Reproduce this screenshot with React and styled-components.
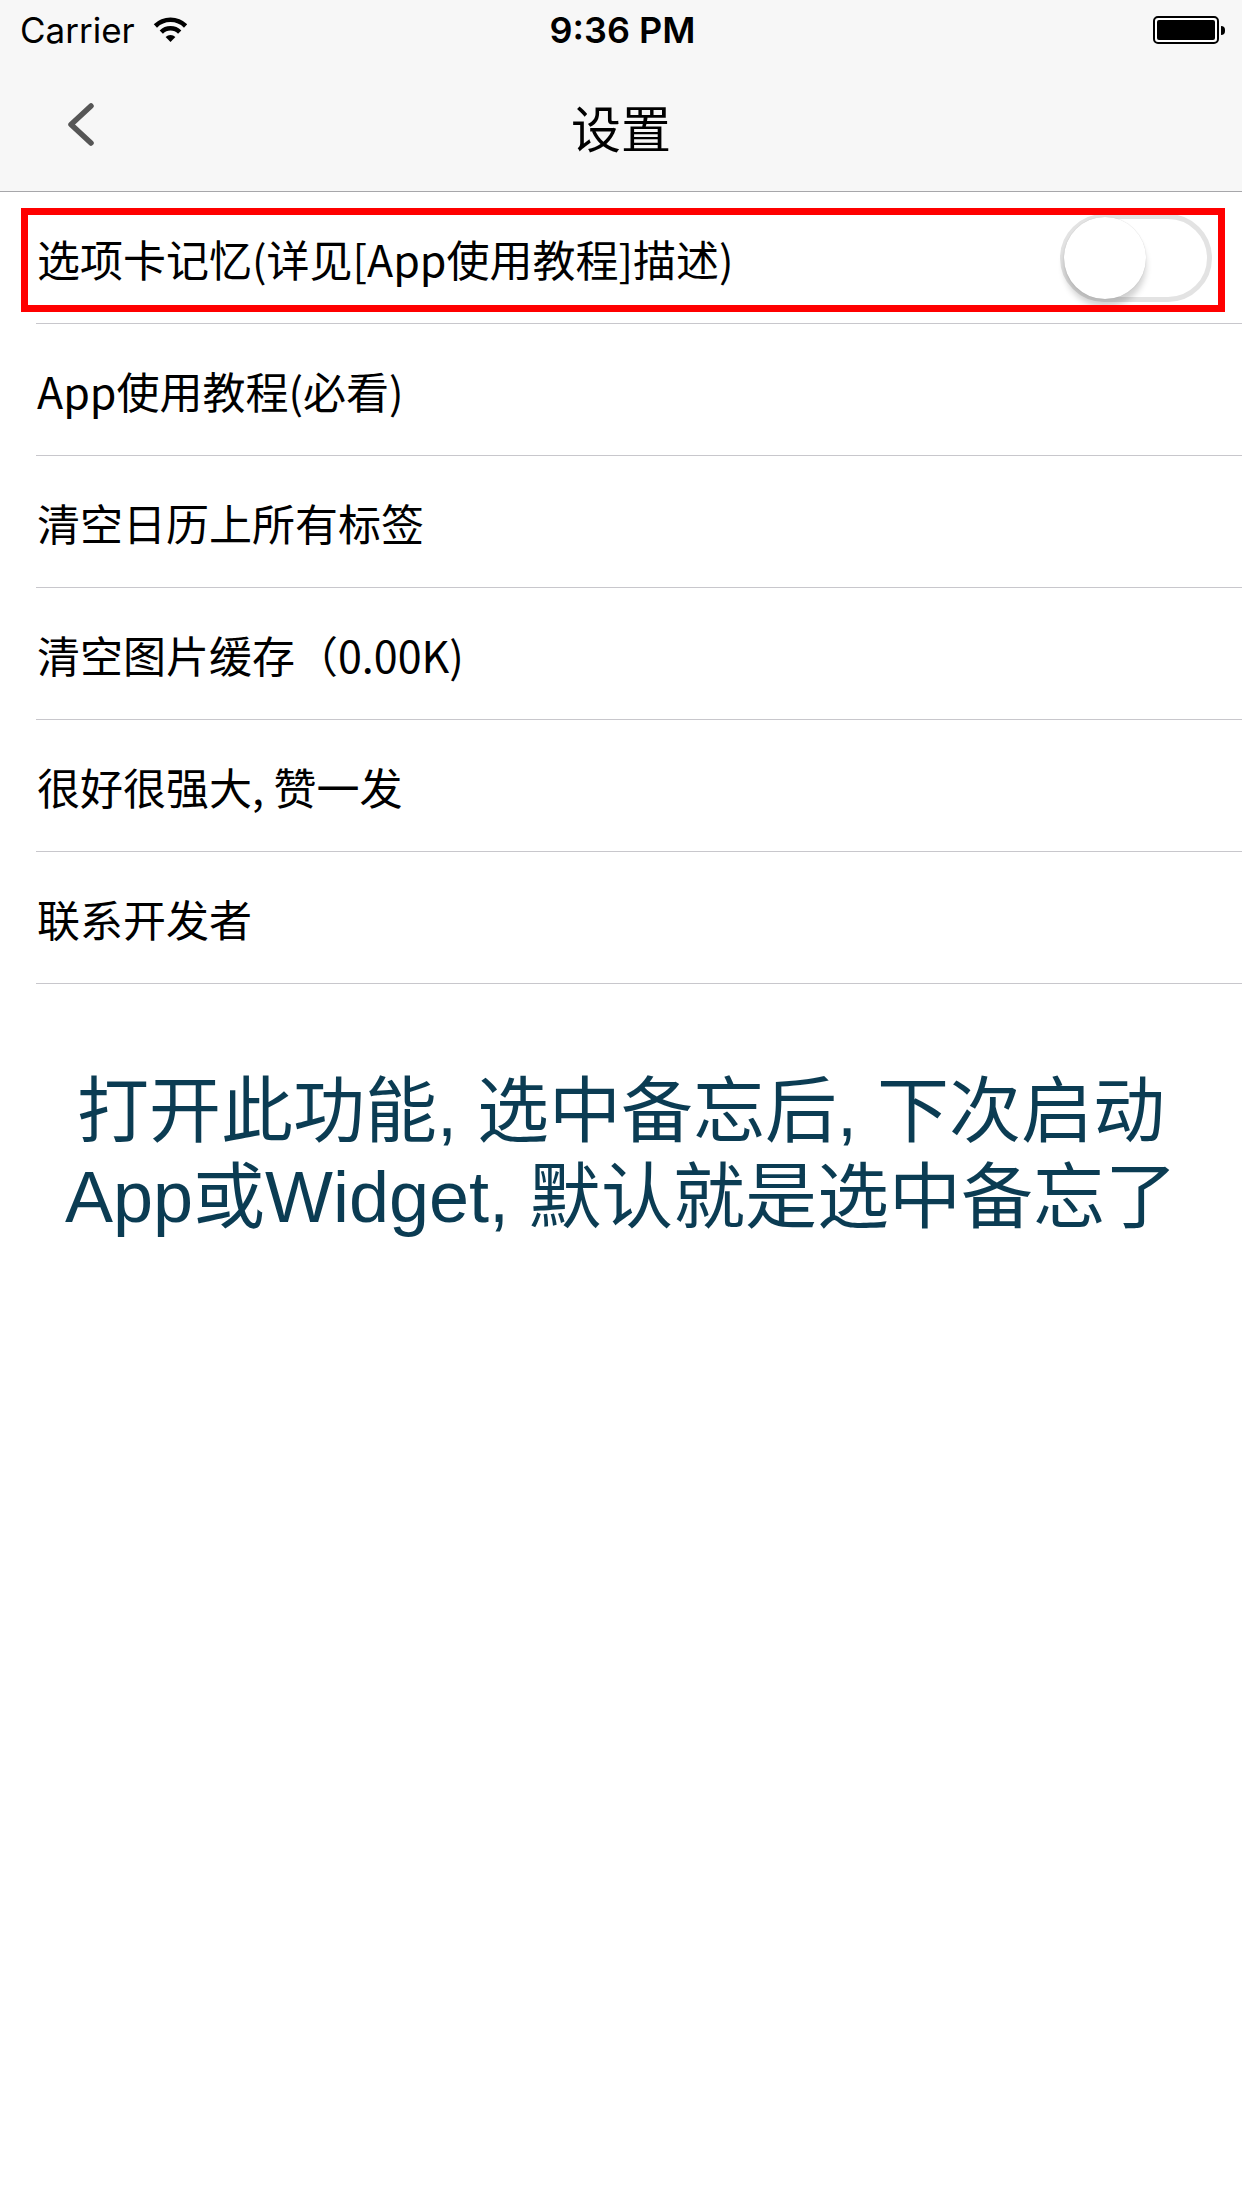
import React from "react";
import styled, { createGlobalStyle } from "styled-components";

const GlobalStyle = createGlobalStyle`
  * { box-sizing: border-box; }
  html, body { margin: 0; padding: 0; background: #ffffff; }
  body {
    font-family: "Liberation Sans", "Noto Sans CJK SC", sans-serif;
    -webkit-font-smoothing: antialiased;
  }
`;

const Page = styled.div`
  width: 1242px;
  min-height: 2208px;
  background: #ffffff;
  display: flex;
  flex-direction: column;
`;

const Header = styled.header`
  background: #f7f7f7;
  border-bottom: 1px solid #a7a7aa;
`;

const StatusBar = styled.div`
  height: 60px;
  display: grid;
  grid-template-columns: 1fr auto 1fr;
  align-items: center;
  padding: 0 17px 0 20px;
  font-family: Inter, "Liberation Sans", sans-serif;
  color: #000;
`;

const Carrier = styled.div`
  display: flex;
  align-items: center;
  gap: 17px;
  font-size: 35px;
`;

const Clock = styled.div`
  font-size: 36px;
  font-weight: 600;
`;

const Battery = styled.div`
  justify-self: end;
  display: flex;
  align-items: center;
  gap: 2px;
`;

const BatteryBody = styled.div`
  width: 66px;
  height: 28px;
  border: 2px solid #000;
  border-radius: 5px;
  padding: 2px;
  background: #fff;
`;

const BatteryFill = styled.div`
  width: 100%;
  height: 100%;
  background: #000;
  border-radius: 2px;
`;

const BatteryNub = styled.div`
  width: 4px;
  height: 9px;
  background: #000;
  border-radius: 0 4px 4px 0;
`;

const NavBar = styled.div`
  height: 131px;
  display: grid;
  grid-template-columns: 1fr auto 1fr;
  align-items: center;
  padding-left: 66px;
`;

const BackButton = styled.button`
  justify-self: start;
  display: flex;
  align-items: center;
  background: none;
  border: none;
  padding: 0;
  cursor: pointer;
`;

const Title = styled.h1`
  margin: 0;
  font-family: "Noto Sans CJK SC", sans-serif;
  font-size: 50px;
  font-weight: 400;
  color: #000;
  transform: translateX(-33px);
`;

const List = styled.ul`
  list-style: none;
  margin: 0;
  padding: 0;
`;

const Row = styled.li`
  position: relative;
  height: 132px;
  margin-left: 36px;
  padding: 0 30px 0 1px;
  border-bottom: 1px solid #c8c7cc;
  display: flex;
  align-items: center;
  justify-content: space-between;
  font-family: "Noto Sans CJK SC", sans-serif;
  font-size: 43px;
  color: #000;
`;

const Highlight = styled.span`
  position: absolute;
  left: -15px;
  right: 17px;
  top: 16px;
  height: 104px;
  border: 7px solid #ff0000;
  pointer-events: none;
`;

const Track = styled.span`
  position: relative;
  width: 152px;
  height: 88px;
  border: 5px solid #e3e3e3;
  border-radius: 44px;
  background: #ffffff;
  flex-shrink: 0;
`;

const Knob = styled.span`
  position: absolute;
  left: -1px;
  top: -2px;
  width: 82px;
  height: 82px;
  border-radius: 50%;
  background: #ffffff;
  box-shadow: 0 8px 6px rgba(0, 0, 0, 0.18), 0 0 1px rgba(0, 0, 0, 0.2);
`;

const Note = styled.p`
  margin: 84px 40px 0;
  text-align: center;
  font-family: "Liberation Sans", "Noto Sans CJK SC", sans-serif;
  font-size: 72px;
  line-height: 86px;
  color: #0b3c53;
`;

const NoteLine = styled.span`
  display: block;
  white-space: nowrap;
`;

const WifiIcon = () => (
  <svg width="37" height="26" viewBox="0 0 37 26">
    <path d="M3.4 9 A21.5 21.5 0 0 1 33.6 9" fill="none" stroke="#000" strokeWidth="4.6" />
    <path d="M9.3 15 A13 13 0 0 1 27.7 15" fill="none" stroke="#000" strokeWidth="4.6" />
    <path d="M18.5 25 L13.6 20.1 A7 7 0 0 1 23.4 20.1 Z" fill="#000" />
  </svg>
);

const ChevronLeft = () => (
  <svg width="30" height="46" viewBox="0 0 30 46">
    <path d="M25 3 L5 21.5 L25 40" fill="none" stroke="#565656" strokeWidth="5.5" strokeLinecap="round" strokeLinejoin="round" />
  </svg>
);

const rows = [
  "App使用教程(必看)",
  "清空日历上所有标签",
  "清空图片缓存（0.00K)",
  "很好很强大, 赞一发",
  "联系开发者",
];

export default function App() {
  return (
    <>
      <GlobalStyle />
      <Page>
        <Header>
          <StatusBar>
            <Carrier>
              Carrier
              <WifiIcon />
            </Carrier>
            <Clock>9:36 PM</Clock>
            <Battery>
              <BatteryBody>
                <BatteryFill />
              </BatteryBody>
              <BatteryNub />
            </Battery>
          </StatusBar>
          <NavBar>
            <BackButton aria-label="返回">
              <ChevronLeft />
            </BackButton>
            <Title>设置</Title>
            <span />
          </NavBar>
        </Header>
        <List>
          <Row>
            <span>选项卡记忆(详见[App使用教程]描述)</span>
            <Track>
              <Knob />
            </Track>
            <Highlight />
          </Row>
          {rows.map((r) => (
            <Row key={r}>
              <span>{r}</span>
            </Row>
          ))}
        </List>
        <Note>
          <NoteLine>打开此功能, 选中备忘后, 下次启动</NoteLine>
          <NoteLine>App或Widget, 默认就是选中备忘了</NoteLine>
        </Note>
      </Page>
    </>
  );
}
